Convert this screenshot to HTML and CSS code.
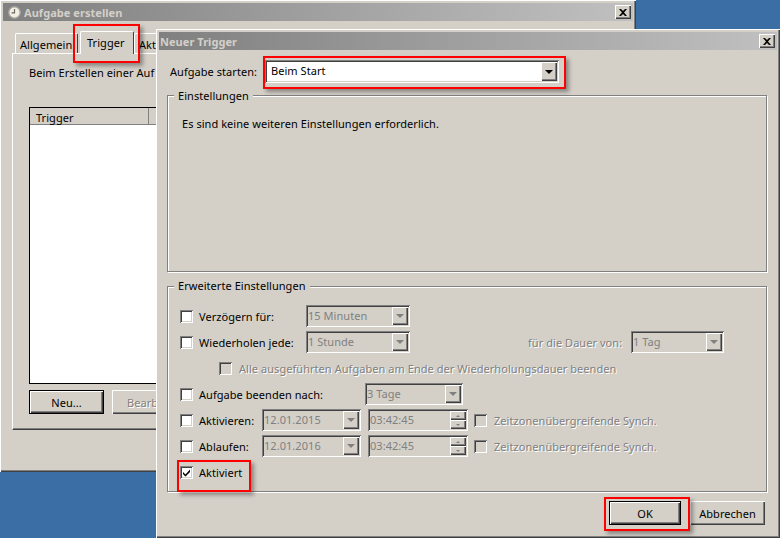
FILE: index.html
```html
<!DOCTYPE html>
<html lang="de">
<head>
<meta charset="utf-8">
<title>Neuer Trigger</title>
<link rel="stylesheet" href="styles.css">
</head>
<body>
<div class="desktop">
  <section class="window back">
    <header class="titlebar">
      <svg class="clock" width="13" height="13" viewBox="0 0 13 13"><circle cx="6.500" cy="6.500" r="5.700" fill="#f1efe6" stroke="#a8a59a" stroke-width="1.400"/><path d="M6.500 3v3.800H3.500" fill="none" stroke="#6a6860" stroke-width="1.200"/></svg>
      <span class="title">Aufgabe erstellen</span>
      <span class="close"><svg width="8" height="7" viewBox="0 0 8 7"><path d="M0 0h2l2 2 2-2h2L5 3.500 8 7H6L4 5 2 7H0l3-3.500z" fill="#000"/></svg></span>
    </header>
    <div class="tabs">
      <span class="tab first">Allgemein</span>
      <span class="tab active">Trigger</span>
      <span class="tab">Akt</span>
    </div>
    <div class="panel">
      <p class="intro">Beim Erstellen einer Auf</p>
      <div class="list">
        <div class="listhead"><span class="col">Trigger</span><span class="col"></span></div>
      </div>
      <div class="listbtns">
        <span class="btn default">Neu...</span>
        <span class="btn off">Bearb</span>
      </div>
    </div>
  </section>

  <div class="mark mark-tab"></div>

  <section class="window front">
    <header class="titlebar">
      <span class="title">Neuer Trigger</span>
      <span class="close"><svg width="8" height="7" viewBox="0 0 8 7"><path d="M0 0h2l2 2 2-2h2L5 3.500 8 7H6L4 5 2 7H0l3-3.500z" fill="#000"/></svg></span>
    </header>
    <div class="startrow">
      <span class="startlab">Aufgabe starten:</span>
      <span class="combo live w-start"><span class="val">Beim Start</span><span class="arrow"><i class="tri"></i></span></span>
    </div>
    <div class="group g1">
      <span class="legend">Einstellungen</span>
      <p class="none">Es sind keine weiteren Einstellungen erforderlich.</p>
    </div>
    <div class="group g2">
      <span class="legend">Erweiterte Einstellungen</span>
      <div class="row"><i class="cb"></i><span class="lab l-a">Verzögern für:</span><span class="combo w-a"><span class="val">15 Minuten</span><span class="arrow"><i class="tri"></i></span></span></div>
      <div class="row"><i class="cb"></i><span class="lab l-a">Wiederholen jede:</span><span class="combo w-a"><span class="val">1 Stunde</span><span class="arrow"><i class="tri"></i></span></span><span class="lab off dauer">für die Dauer von:</span><span class="combo w-d"><span class="val">1 Tag</span><span class="arrow"><i class="tri"></i></span></span></div>
      <div class="row sub"><i class="cb off"></i><span class="lab off">Alle ausgeführten Aufgaben am Ende der Wiederholungsdauer beenden</span></div>
      <div class="row"><i class="cb"></i><span class="lab l-b">Aufgabe beenden nach:</span><span class="combo w-b"><span class="val">3 Tage</span><span class="arrow"><i class="tri"></i></span></span></div>
      <div class="row wide"><i class="cb"></i><span class="lab l-c">Aktivieren:</span><span class="combo w-c"><span class="val">12.01.2015</span><span class="arrow"><i class="tri"></i></span></span><span class="combo w-t"><span class="val">03:42:45</span><span class="spin"><b><i class="up"></i></b><b><i class="dn"></i></b></span></span><i class="cb off tz"></i><span class="lab off">Zeitzonenübergreifende Synch.</span></div>
      <div class="row"><i class="cb"></i><span class="lab l-c">Ablaufen:</span><span class="combo w-c"><span class="val">12.01.2016</span><span class="arrow"><i class="tri"></i></span></span><span class="combo w-t"><span class="val">03:42:45</span><span class="spin"><b><i class="up"></i></b><b><i class="dn"></i></b></span></span><i class="cb off tz"></i><span class="lab off">Zeitzonenübergreifende Synch.</span></div>
      <div class="row"><i class="cb"><svg width="9" height="9" viewBox="0 0 9 9"><path d="M1 4l2.500 2.500L8 1.500v2.500L3.500 8.500 1 6z" fill="#000"/></svg></i><span class="lab">Aktiviert</span></div>
    </div>
    <footer class="actions">
      <span class="btn default ok">OK</span>
      <span class="btn cancel">Abbrechen</span>
    </footer>
  </section>

  <div class="mark mark-combo"></div>
  <div class="mark mark-check"></div>
  <div class="mark mark-ok"></div>
</div>
</body>
</html>
```
FILE: styles.css
```css
* { box-sizing: border-box; }
html, body { margin: 0; padding: 0; }
body { width: 780px; height: 538px; overflow: hidden; background: #3a6ea5; font: 11px/15px "Noto Sans", "DejaVu Sans", sans-serif; letter-spacing: .05px; color: #000; }
.desktop { position: relative; width: 780px; height: 538px; overflow: hidden; }

.window { position: absolute; background: #d4d0c8; display: flex; flex-direction: column; padding: 3px;
  box-shadow: inset 1px 1px 0 #fff, inset -1px -1px 0 #404040, inset -2px -2px 0 #808080; }
.back { left: 0; top: 0; width: 636px; height: 472px; z-index: 1; }
.front { left: 156px; top: 29px; width: 624px; height: 509px; z-index: 3; }

.titlebar { flex: none; height: 18px; display: flex; align-items: center; padding: 0 2px 0 3px; background: linear-gradient(90deg, #808080, #c0c0c0); }
.title { font-weight: 700; color: #d4d0c8; flex: 1; }
.front .title { margin-left: -2px; }
.clock { margin: 0 3px 0 2px; flex: none; }
.close { flex: none; width: 16px; height: 14px; background: #d4d0c8; display: flex; align-items: center; justify-content: center;
  box-shadow: inset 1px 1px 0 #fff, inset -1px -1px 0 #404040, inset -2px -2px 0 #808080; }

.tabs { display: flex; height: 32px; align-items: flex-end; padding-left: 12px; flex: none; position: relative; z-index: 1; }
.tab { height: 20px; padding: 3px 6px 0 4px; border-top: 1px solid #fff; border-left: 1px solid #fff; border-right: 1px solid #404040; white-space: nowrap; background: #d4d0c8; border-radius: 2px 2px 0 0; }
.tab.first { width: 63px; }
.tab.active { width: 54px; height: 23px; margin-bottom: -1px; margin-left: 2px; padding: 3px 0 0 6px; }
.panel { margin-left: 9px; width: 611px; height: 377px; padding: 11px 16px 0; border-top: 1px solid #fff; border-left: 1px solid #fff; box-shadow: inset -1px -1px 0 #808080; border-bottom: 1px solid #404040; display: flex; flex-direction: column; }
.intro { margin: 0; white-space: nowrap; }
.list { margin-top: 27px; height: 277px; background: #fff; border: 1px solid #000; }
.listhead { display: flex; height: 17px; background: #d4d0c8; box-shadow: inset 0 -1px 0 #808080; }
.col { width: 119px; padding: 2px 0 0 6px; box-shadow: inset -1px -1px 0 #808080; }
.listbtns { display: flex; gap: 8px; margin-top: 6px; }
.btn { width: 75px; height: 24px; display: flex; align-items: center; justify-content: center; background: #d4d0c8;
  box-shadow: inset 1px 1px 0 #fff, inset -1px -1px 0 #404040, inset -2px -2px 0 #808080; white-space: nowrap; }
.btn.default { border: 1px solid #000; }
.btn.off { color: #808080; text-shadow: 1px 1px 0 #fff; justify-content: flex-start; padding-left: 15px; }

.startrow { display: flex; align-items: center; height: 23px; margin: 10px 0 0 11px; flex: none; }
.startlab { width: 95px; flex: none; }
.combo { display: flex; height: 22px; padding: 2px; background: #d4d0c8; flex: none;
  box-shadow: inset 1px 1px 0 #808080, inset -1px -1px 0 #fff, inset 2px 2px 0 #404040, inset -2px -2px 0 #d4d0c8; color: #808080; }
.combo.live { height: 23px; background: #fff; color: #000; }
.val { flex: 1; padding: 1px 0 0; white-space: nowrap; overflow: hidden; }
.live .val { padding: 1px 0 0 4px; }
.arrow { flex: none; width: 16px; background: #d4d0c8; display: flex; align-items: center; justify-content: center;
  box-shadow: inset 1px 1px 0 #fff, inset -1px -1px 0 #404040, inset -2px -2px 0 #808080; }
.tri { display: block; width: 0; height: 0; border: 4px solid transparent; border-top: 4px solid #808080; border-bottom: 0; }
.live .tri { border-top-color: #000; }
.w-start { width: 294px; }
.w-a { width: 104px; }
.w-b { width: 98px; }
.w-c { width: 99px; }
.w-d { width: 93px; }
.w-t { width: 100px; margin-left: 7px; }
.spin { flex: none; width: 16px; display: flex; flex-direction: column; }
.spin b { flex: 1; display: flex; align-items: center; justify-content: center; background: #d4d0c8;
  box-shadow: inset 1px 1px 0 #fff, inset -1px -1px 0 #404040, inset -2px -2px 0 #808080; }
.up, .dn { display: block; width: 0; height: 0; border: 2px solid transparent; }
.up { border-bottom-color: #808080; border-top: 0; }
.dn { border-top-color: #808080; border-bottom: 0; }

.group { margin-left: 8px; width: 600px; border: 1px solid #808080; box-shadow: 1px 1px 0 #fff, inset 1px 1px 0 #fff; flex: none; position: relative; }
.legend { position: absolute; left: 6px; top: -8px; padding: 0 4px; background: #d4d0c8; white-space: nowrap; }
.g1 { margin-top: 12px; height: 177px; }
.g2 { margin-top: 14px; height: 206px; padding: 18px 0 0 12px; }
.g2 .legend { top: -9px; }
.none { margin: 20px 0 0 14px; }

.row { display: flex; align-items: center; height: 22px; margin-bottom: 4px; white-space: nowrap; }
.row.sub { margin-left: 39px; }
.row.wide { margin-top: 1px; }
.cb { display: flex; align-items: center; justify-content: center; flex: none; width: 13px; height: 13px; background: #fff; margin-right: 6px;
  box-shadow: inset 1px 1px 0 #808080, inset -1px -1px 0 #fff, inset 2px 2px 0 #404040, inset -2px -2px 0 #d4d0c8; }
.cb.off { background: #d4d0c8; margin-right: 7px; }
.lab { flex: none; }
.off { color: #808080; text-shadow: 1px 1px 0 #fff; }
.l-a { width: 107px; }
.l-b { width: 166px; }
.l-c { width: 63px; }
.dauer { margin-left: 118px; width: 103px; }
.tz { margin-left: 6px; }

.actions { display: flex; justify-content: flex-end; gap: 9px; margin: 9px 12px 0 0; align-items: center; }
.ok { width: 72px; }
.cancel { width: 75px; }

.mark { position: absolute; border: 2px solid #f00; box-shadow: 3px 3px 4px rgba(0,0,0,.35); z-index: 5; }
.mark-tab { left: 73px; top: 24px; width: 67px; height: 39px; z-index: 2; }
.mark-combo { left: 263px; top: 56px; width: 303px; height: 33px; }
.mark-check { left: 177px; top: 460px; width: 74px; height: 32px; }
.mark-ok { left: 604px; top: 497px; width: 86px; height: 34px; }
```
